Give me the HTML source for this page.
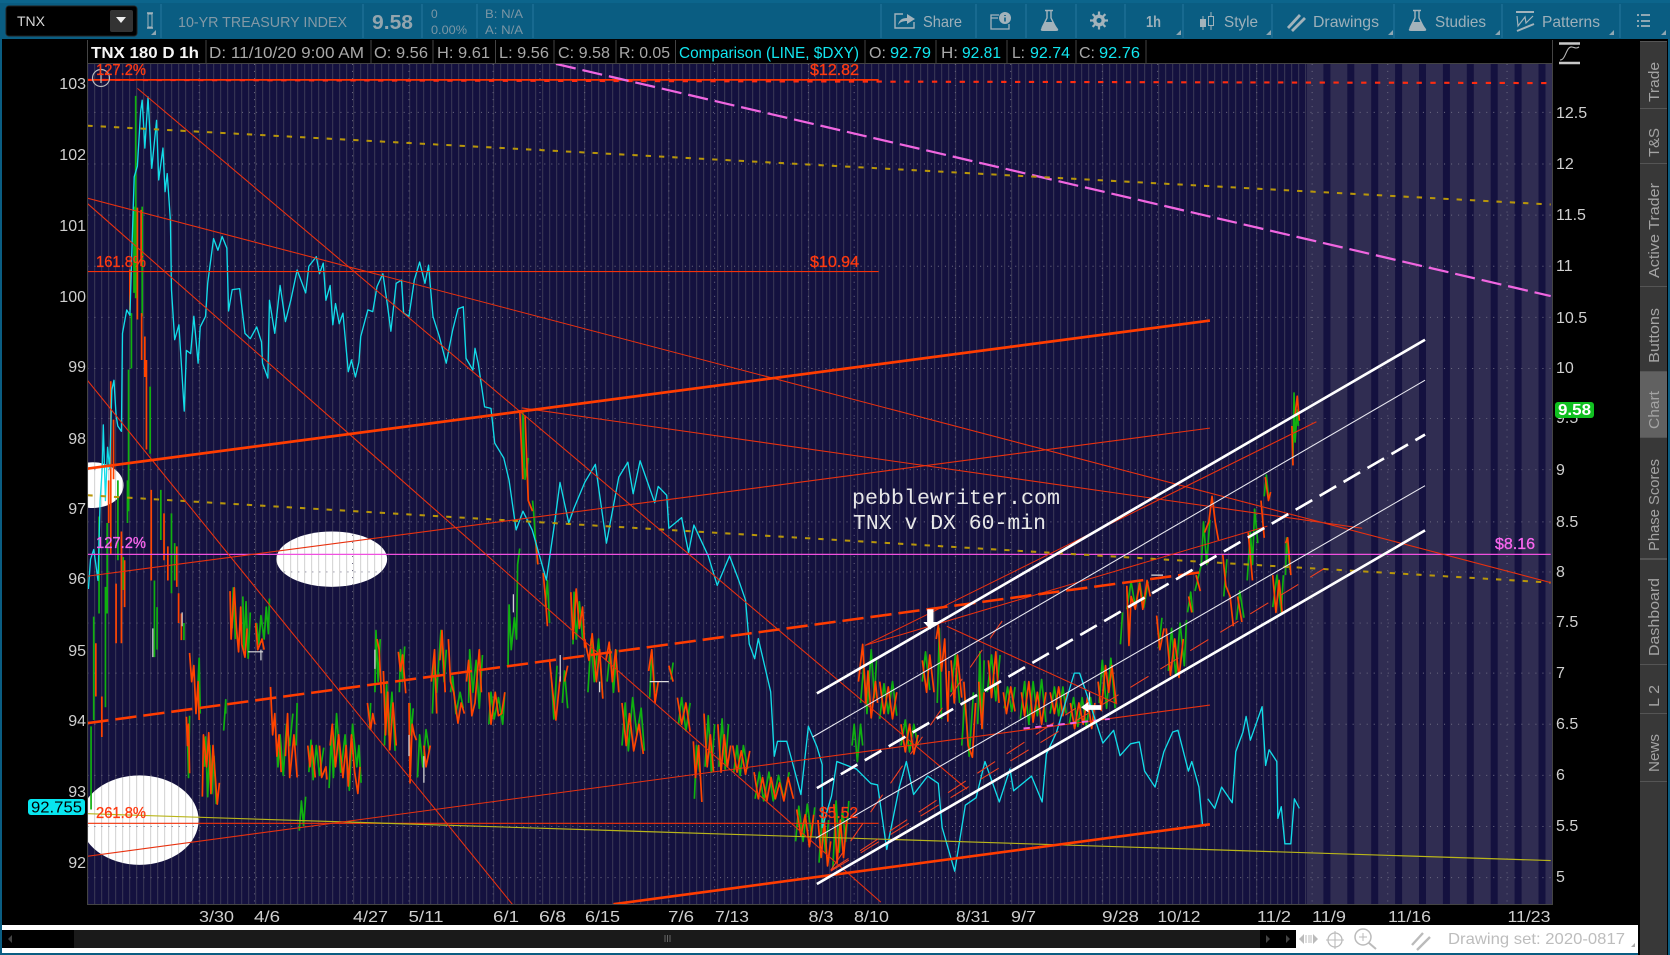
<!DOCTYPE html>
<html lang="en"><head><meta charset="utf-8"><title>TNX Chart</title>
<style>
html,body{margin:0;padding:0;background:#000;width:1670px;height:955px;overflow:hidden}
svg{display:block;font-family:"Liberation Sans",sans-serif}
.tb{fill:#9db0ba;font-size:16px}
.hd{fill:#a8a8a8;font-size:16px}
.cy{fill:#12e6f0;font-size:16px}
.ax{fill:#cfcfcf;font-size:16px}
.dt{fill:#cfcfcf;font-size:16px}
.tab{fill:#a3a3a3;font-size:15px}
.sep{stroke:#1d6f94;stroke-width:1.5}
.hs{stroke:#444;stroke-width:1}
.ic{fill:#a3b3bb}
.is{stroke:#a3b3bb;fill:none}
.rl{fill:#ff3a10;stroke:#ff3a10;stroke-width:.3}
.pl{fill:#f866ee;stroke:#f866ee;stroke-width:.3}
</style></head><body>
<svg width="1670" height="955" viewBox="0 0 1670 955" xmlns="http://www.w3.org/2000/svg">
<defs>
<pattern id="st" patternUnits="userSpaceOnUse" width="7" height="10" x="3"><rect x="0" y="0" width="1.2" height="10" fill="#808080" fill-opacity=".3"/></pattern>
<clipPath id="cc"><rect x="88" y="64" width="1464" height="840"/></clipPath>
</defs>
<rect width="1670" height="955" fill="#000"/>

<!-- toolbar -->
<rect x="0" y="0" width="1670" height="39" fill="#0a5d82"/>
<rect x="0" y="0" width="1670" height="3" fill="#0c658c"/>
<rect x="0" y="39" width="2" height="916" fill="#0a5d82"/>
<rect x="1668" y="39" width="2" height="916" fill="#0a5d82"/>
<rect x="6" y="6" width="131" height="30" rx="3" fill="#000" stroke="#222"/>
<rect x="110" y="10" width="23" height="22" rx="2" fill="#333"/>
<path d="M116 17h10l-5 6z" fill="#eee"/>
<text x="17" y="26" fill="#d8d8d8" font-size="14" textLength="28" lengthAdjust="spacingAndGlyphs">TNX</text>
<path d="M147 13h6M147 28h6" stroke="#a3b3bb" stroke-width="1.5"/><rect x="148" y="14" width="4" height="13" fill="none" stroke="#a3b3bb"/>
<path d="M156 30v5h-5z" fill="#8fa7b3"/>
<g class="sep"><path d="M161 4V38M363 4V38M422 4V38M477 4V38M533 4V38M881 4V38M976 4V38M1026 4V38M1076 4V38M1125 4V38M1183 4V38M1272 4V38M1394 4V38M1502 4V38M1620 4V38"/></g>
<text x="178" y="27" fill="#8399a6" font-size="15" textLength="169" lengthAdjust="spacingAndGlyphs">10-YR TREASURY INDEX</text>
<text x="372" y="29" fill="#93a5ae" font-size="20" font-weight="bold" textLength="41" lengthAdjust="spacingAndGlyphs">9.58</text>
<text x="431" y="18" fill="#7b96a5" font-size="12">0</text>
<text x="431" y="34" fill="#7b96a5" font-size="12" textLength="36" lengthAdjust="spacingAndGlyphs">0.00%</text>
<text x="485" y="18" fill="#7b96a5" font-size="12" textLength="38" lengthAdjust="spacingAndGlyphs">B: N/A</text>
<text x="485" y="34" fill="#7b96a5" font-size="12" textLength="38" lengthAdjust="spacingAndGlyphs">A: N/A</text>

<text x="923" y="27" class="tb" textLength="39" lengthAdjust="spacingAndGlyphs">Share</text>
<text x="1146" y="27" class="tb" font-weight="bold" font-size="14" textLength="15" lengthAdjust="spacingAndGlyphs">1h</text>
<text x="1224" y="27" class="tb" textLength="34" lengthAdjust="spacingAndGlyphs">Style</text>
<text x="1313" y="27" class="tb" textLength="66" lengthAdjust="spacingAndGlyphs">Drawings</text>
<text x="1435" y="27" class="tb" textLength="51" lengthAdjust="spacingAndGlyphs">Studies</text>
<text x="1542" y="27" class="tb" textLength="58" lengthAdjust="spacingAndGlyphs">Patterns</text>
<!-- share -->
<path class="is" stroke-width="1.4" d="M914 22V28H895V14H903"/>
<path class="ic" d="M898 25C899 20 902 18 907 18V14L915 19L907 24V21C903 21 900 22 898 25z"/>
<!-- notes -->
<path class="is" stroke-width="1.3" d="M1009 24V29H991V15H999M991 18H998"/>
<circle cx="1005" cy="18" r="6" class="ic"/><path d="M1005 15v1M1005 17.5v4" stroke="#0a5d82" stroke-width="1.6"/>
<!-- flask 1 -->
<path class="is" stroke-width="1.4" d="M1045 10.500h8M1047 11V18L1042 28M1051 11V18L1056 28"/>
<path class="ic" d="M1045 22H1053L1058 29Q1059 31 1056 31H1043Q1040 31 1041 29z"/>
<!-- gear -->
<circle cx="1099" cy="20.500" r="4.500" fill="none" stroke="#a3b3bb" stroke-width="3"/>
<path d="M1099 11.500v18M1090 20.500h18M1092.600 14.100l12.800 12.800M1105.400 14.100l-12.800 12.800" stroke="#a3b3bb" stroke-width="2.200"/>
<circle cx="1099" cy="20.500" r="2.500" fill="#0a5d82"/>
<!-- candles -->
<rect x="1200" y="19" width="6" height="8" class="ic"/><path class="is" d="M1203 16V30"/>
<rect x="1208.500" y="16.500" width="5" height="9" class="is"/><path class="is" d="M1211 12V16M1211 26V30"/>
<!-- drawings -->
<path class="is" stroke-width="2.800" d="M1288 28L1300 15M1292 31L1305 18"/>
<!-- flask 2 -->
<path class="is" stroke-width="1.4" d="M1413 10.500h8M1415 11V18L1410 28M1419 11V18L1424 28"/>
<path class="ic" d="M1413 22H1421L1426 29Q1427 31 1424 31H1411Q1408 31 1409 29z"/>
<!-- patterns -->
<path class="is" stroke-width="2" d="M1516 12H1534M1517 31L1534 24"/>
<path class="is" stroke-width="1.200" d="M1517 16L1518 26L1525 17L1526 23L1533 16"/>
<!-- list -->
<path d="M1637 15h2M1637 21h2M1637 26h2M1641 15h9M1641 21h9M1641 26h9" stroke="#a3b3bb" stroke-width="1.800"/>
<g fill="#8fa7b3">
<path d="M1181 30v5h-5zM1271 30v5h-5zM1393 30v5h-5zM1500 30v5h-5zM1614 30v5h-5zM1666 30v5h-5z"/>
</g>

<!-- header row -->
<rect x="87" y="40" width="1465" height="23" fill="#000"/>
<path class="hs" d="M87 63.500H1552M87.500 40V63M206 40V63M371 40V63M433 40V63M495.500 40V63M554 40V63M616 40V63M675.500 40V63M865 40V63M936 40V63M1007 40V63M1076 40V63M1146 40V63M1552.500 40V63"/>
<text x="91" y="58" fill="#f5f5f5" font-size="16" font-weight="bold" textLength="108" lengthAdjust="spacingAndGlyphs">TNX 180 D 1h</text>
<text x="209" y="58" class="hd" textLength="155" lengthAdjust="spacingAndGlyphs">D: 11/10/20 9:00 AM</text>
<text x="374" y="58" class="hd" textLength="54" lengthAdjust="spacingAndGlyphs">O: 9.56</text>
<text x="437" y="58" class="hd" textLength="53" lengthAdjust="spacingAndGlyphs">H: 9.61</text>
<text x="499" y="58" class="hd" textLength="50" lengthAdjust="spacingAndGlyphs">L: 9.56</text>
<text x="558" y="58" class="hd" textLength="52" lengthAdjust="spacingAndGlyphs">C: 9.58</text>
<text x="619" y="58" class="hd" textLength="51" lengthAdjust="spacingAndGlyphs">R: 0.05</text>
<text x="679" y="58" class="cy" textLength="180" lengthAdjust="spacingAndGlyphs">Comparison (LINE, $DXY)</text>
<text x="869" y="58" class="hd" textLength="17" lengthAdjust="spacingAndGlyphs">O:</text><text x="890" y="58" class="cy" textLength="41" lengthAdjust="spacingAndGlyphs">92.79</text>
<text x="941" y="58" class="hd" textLength="17" lengthAdjust="spacingAndGlyphs">H:</text><text x="962" y="58" class="cy" textLength="39" lengthAdjust="spacingAndGlyphs">92.81</text>
<text x="1012" y="58" class="hd" textLength="13" lengthAdjust="spacingAndGlyphs">L:</text><text x="1030" y="58" class="cy" textLength="40" lengthAdjust="spacingAndGlyphs">92.74</text>
<text x="1079" y="58" class="hd" textLength="16" lengthAdjust="spacingAndGlyphs">C:</text><text x="1099" y="58" class="cy" textLength="41" lengthAdjust="spacingAndGlyphs">92.76</text>

<!-- chart -->
<g clip-path="url(#cc)">
<rect x="87" y="63" width="1466" height="842" fill="#14113f"/>
<rect x="1307" y="63" width="246" height="842" fill="#302d52"/>
<g fill="#14113f">
<rect x="1323.400" y="63" width="7" height="842"/><rect x="1347.300" y="63" width="7" height="842"/><rect x="1371.200" y="63" width="7" height="842"/><rect x="1395.100" y="63" width="7" height="842"/><rect x="1419" y="63" width="7" height="842"/><rect x="1442.900" y="63" width="7" height="842"/><rect x="1466.800" y="63" width="7" height="842"/><rect x="1490.700" y="63" width="7" height="842"/><rect x="1514.600" y="63" width="7" height="842"/><rect x="1538.500" y="63" width="7" height="842"/>
</g>
<g transform="scale(1.06505)">
<ellipse cx="311.500" cy="525" rx="52" ry="26" fill="#fff"/>
<ellipse cx="131" cy="770" rx="55.500" ry="42" fill="#fff"/>
<ellipse cx="87" cy="455.500" rx="29" ry="21.500" fill="#fff"/>
</g>
<rect x="87" y="63" width="1220" height="842" fill="url(#st)"/>
<g transform="scale(1.06505)" fill="none" stroke-linejoin="round">
<!-- grid dots -->
<path stroke="#6a6880" stroke-width=".9" stroke-dasharray="1 5.600" d="M82 105.500H1456M82 154H1456M82 202H1456M82 250H1456M82 298H1456M82 346H1456M82 393H1456M82 441H1456M82 490H1456M82 537H1456M82 585H1456M82 632H1456M82 680H1456M82 728H1456M82 776H1456M82 824H1456M187 60V849M239 60V849M331 60V849M384 60V849M463 60V849M507 60V849M549 60V849M628 60V849M671 60V849M759 60V849M802 60V849M897 60V849M949 60V849M1035 60V849M1087 60V849M1180 60V849M1232 60V849M1303 60V849M1415 60V849"/>

<!-- candles green -->
<path stroke="#10b010" stroke-width="1.600" d="M127.400 90V280M125.800 194V275M133.500 194V297M120.700 347V480M123.400 294V346M141 363V426M85.500 682V760M88 579V676M93 485V576M99 551V664M100.600 491V576M110.700 451V526M115.700 523V554M119.700 451V491M145 545V617M147.500 570V610M151 460V507M161 482V557M164 510V545M172.700 585V601
M176 690 177 730 178 672M186 640 187 618 188 670
M192 720 193 692 195 748 197 700 199 745 201 710 203 755M210 686 212 657 212 670
M218 590 219 552 221 600M228 560 229 610 231 565 233 618 235 575M241 585 243 605 245 578 248 600 250 570 252 595 253 562
M260 700 261 720 263 690 266 728 269 680 272 700 275 670M278 700 279 660
M281 780 283 752 285 775 287 748M290 725 292 695 294 732 297 700 300 728 304 702
M309 740 311 690 313 730 316 670 320 725 324 690 328 742 331 680 335 720 337 700 339 735
M347 685 348 660M352 650 353 592 355 640 357 600M361 700 363 640 365 690 368 650 371 705
M375 650 376 610 378 640 380 607M385 660 386 690 388 665M392 730 394 690 397 720 400 685 403 705
M406 670 408 620 410 650 414 592 417 640 419 610M423 650 425 635 428 670 432 650 435 665
M440 660 441 610 444 650 447 620 450 665 453 615M459 680 461 650 464 675 468 655 472 680 474 650
M477 626 478 568 480 610 483 580 485 600 486 530 488 515M491 450 491 388 493 450 496 430M500 470 501 480 503 510 505 530M512 570 514 545 516 585M518 640 520 675 523 625
M528 660 530 630 533 665M538 605 539 556 541 600 544 565 547 600
M552 650 555 600 558 640 562 600 566 655M570 640 573 610 576 650 579 610
M584 700 587 660 590 705 594 655 598 690 602 665 605 705M610 655 612 612 615 650
M630 638 632 622M637 680 640 655 644 686 648 660M652 750 654 700 657 725
M662 720 665 672 668 725 671 680M675 720 678 675 681 722 684 680M689 725 692 700 695 728 698 700 702 722
M709 750 713 725 717 752 722 725 726 752 731 728 736 750 741 725
M747 790 750 757 754 790 758 755 762 785 765 758M769 810 772 765 775 800 778 770M782 815 785 752 788 800 791 760 794 790 797 752
M800 700 802 680 805 715 808 680 810 700M808 660 811 625 814 670 818 610 821 655 823 620
M826 675 830 642 834 670 838 640 842 672M846 700 850 676 854 706 858 680 862 700M866 640 869 612 873 648
M880 660 882 590 884 675M893 650 897 615 901 660M903 700 906 655 910 710 914 650M918 680 920 612 922 684 924 620
M927 650 931 615 935 658 939 615M943 665 946 645 950 668 953 645M958 675 962 640 966 680 970 640 974 672 978 638 982 678
M986 670 990 645 994 672 998 645 1001 670M1004 680 1008 655 1012 682 1016 655 1020 682 1024 655 1028 680
M1032 660 1035 620 1039 665 1043 618 1047 665
M1052 605 1054 575M1058 572 1062 546 1066 570 1070 546 1074 570 1078 546
M1088 608 1091 580M1097 630 1100 590 1104 635 1108 585 1112 625 1114 582M1115 575 1118 556 1120 575M1122 555 1126 538 1128 530 1130 490 1133 530 1136 488
M1149 560 1152 525M1161 582 1164 555 1168 580M1171 545 1174 500 1176 530 1178 478 1181 510M1187 466 1189 446 1191 466
M1195 570 1199 540 1203 575 1205 540M1207 540 1208 505 1211 535M1214 430 1215 369 1216 415 1218 385 1219 400"/>

<!-- candles red -->
<path stroke="#ff4400" stroke-width="1.600" d="M122 253V291M129 195V300M132.500 197V250M133 294V338M136 316V354M137.500 338V422M104 358V470M106.600 394V450M90 604V654M95.600 654V692M102 451V491M104 451V520M109 548V604M114 499V604M117 526V570M142 460V545M154 482V526M157.600 513V545M166 513V551M167.700 557V585M170.300 576V601
M175 673 176 700 177 680 178 726M178 613 180 640 182 625 184 670 186 640 187 676
M190 748 191 690 194 720 196 688 198 745 200 700 204 755 206 735
M216 555 217 600 220 552 222 590 224 612 226 570 227 605 230 617 232 590M240 585 242 610 246 600 248 610
M254 645 256 690 258 670 260 710 262 690 264 725M268 710 270 670 272 730 276 690 279 730
M289 700 291 720 293 700 296 730M300 700 302 730 306 720 307 732M310 700 312 680 315 720 318 690 322 730 325 700 327 738 330 690 333 725 336 745 338 720
M345 660 348 685 350 670 352 680M354 600 356 610 358 651M360 630 362 690 364 650 366 704 369 660 372 700
M374 612 376 630 378 615 381 651M384 660 385 735 387 680 389 690 391 695M398 700 400 720 404 700
M405 640 408 610 410 670M413 620 415 592 418 650M421 600 423 640 426 650 430 679 433 660 436 670
M438 640 440 620 443 672 446 660 450 610 452 650M459 650 461 680 465 650 468 672 471 670 474 650
M488 385 491 450M493 390 496 470 500 480M503 507 505 530M510 538 512 560 514 588M516 620 519 650 522 676 526 635
M530 640 533 625M536 556 538 600 541 553 544 590 547 570 549 608
M549 600 553 620 556 595 560 640 563 610 566 656M569 620 572 603 575 640 578 610 581 650
M584 660 588 700 591 670 595 705 600 680 604 708M609 630 612 610 615 660 618 640
M628 625 632 640M636 655 640 680 644 660 648 687M651 696 653 730 656 700 659 753
M661 670 664 720 667 690 670 725M674 680 677 725 680 690 683 720 686 700M688 700 692 725 696 705 700 727 704 705
M708 725 712 750 716 730 720 752 724 730 728 750 732 735 736 752 740 730 745 750
M748 760 752 785 756 765 760 795 764 765M768 770 771 805 774 770 777 813 780 790M783 755 786 810 789 770 792 805 795 770
M806 640 810 605 813 660 815 630 818 674 822 640 824 660
M826 640 830 670 834 645 838 675 842 650M846 680 850 706 854 680 858 708 862 690M866 620 870 650 873 615 877 650
M879 600 881 587 884 630 887 600 890 677 891 630M893 620 896 660 899 615 903 655M905 640 909 700 913 711 916 660M919 640 922 684 924 650
M928 620 931 655 935 612 938 660M942 650 945 670 949 645 953 668M959 650 962 672 966 640 970 678 974 650 978 680 982 650
M986 650 990 670 994 645 998 672 1002 650M1005 660 1009 684 1013 660 1017 680 1021 655 1025 684 1028 660
M1031 640 1034 667 1038 625 1041 650 1044 625 1048 660
M1058 550 1060 606 1062 560 1066 572 1070 548 1073 572 1077 545 1080 560
M1086 578 1089 610 1093 590M1095 590 1099 634 1103 600 1107 636 1111 600M1116 560 1119 575M1123 540 1127 555M1131 500 1135 490 1138 466 1141 490 1144 507M1148 520 1151 550 1155 560 1158 588M1162 560 1166 584M1172 500 1176 545M1184 470 1187 505M1188 448 1191 470 1193 462M1195 540 1198 575 1201 545 1204 577M1207 510 1209 505 1212 540M1213 400 1214 437M1216 390 1218 372 1220 395"/>
<path stroke="#ddd" stroke-width="1.100" d="M143.500 590V617M171 575V588M233 612H247M245 610V620M352 610V628M384 690V710M398 710V735M482 558V575M526 615V640M563 640V650M610 640H628M1081 540H1092M1023 650V665"/>

<!-- cyan -->
<polyline stroke="#12dce8" stroke-width="1.250" points="83,553 85,525 88,516 90,530 92,545 94,470 96,440 97,399 99,470 101,420 103,440 105,366 107,357 109,390 110.600,400 114,405 115,313 119,291 122,296 124,230 126,166 129,156 132,105 133.500,94 136,139 139,91 142.500,158 147,113 149,169 153,139 155,180 157,163 160,207 161,272 164,319 168,305 173,386 175,329 179,332 182,297 186,341 188,307 193,297 195,266 200.500,224 204.600,235 208.600,222 213,233 214.600,292 218,272 225,271 230,313 235,318 241,307 245.500,321 246.500,341 251.500,355 253,282 258,313 263,268 268,302 273,282 279,253.500 287,275 290,250 297,241 300,257 303.500,247 306,282 310,268 312.500,305 315,285 318.500,304 322,294 327,349 330,338 333.700,354 337,340 338.700,316 345.400,291 350,292.600 354,269 359.500,257 364,288 367,311 372,266 377,263 379,294 384,297 389,263 394,246 399,266 402.400,249 406.500,297 412.500,316 419,341 425,310 430,290 435,288 437.600,336.500 444,347.400 446,327 449,341 455,382 461,383.400 464.500,416 473,430 478,451 484.600,497.600 491,480 499.700,497.600 513,544.600 519.800,497.600 525.800,453 534,491 539,477 549,453 559,436 569.400,510 581,448 589.500,434 594.500,463.600 601,432.600 614.700,472 618,456.700 626,465 628,496 640,486 646.500,518.600 651.500,493 665,522 673.400,549.600 685,522 693.500,544.500 700,563.400 703.500,604.700 708.600,618.500 712,599.600 723.600,649.500 727,710 730,696 738.700,696 743.800,715 752,746 759,682 767,701 772,718 772,777 780.700,747.600 785.700,715 804,722 817.600,735.600 824,737 832.600,797.600 844.400,739 851,715 857.800,746 871,728.700 881,735.600 884.600,777 896.400,818 903,777 906.400,756 916.500,749 924.800,715 938.300,753 948.300,722 951.700,742.500 968.500,728.700 978.500,753 982.500,708 992,687.400 1008.700,632 1013.700,632 1025.500,667 1035.500,697.700 1045.600,685.700 1051.600,709.500 1061.500,698.400 1069.700,696.600 1074.700,724 1084.500,739 1092.800,705.800 1101,687.400 1106,685.600 1115.800,724 1119,715 1125.700,739 1129,774"/>
<polyline stroke="#12dce8" stroke-width="1.250" points="1134,750 1140.500,759 1147,739 1157,753.700 1160.300,705.800 1167,687.400 1170,672.700 1174,695 1185,663.500 1188.300,718.700 1191.600,704 1198.800,715 1199.800,768.400 1203,757.400 1206.400,792.300 1212,792.300 1215.300,750 1220,759"/>

<!-- horizontals -->
<path stroke="#f2320a" stroke-width="1" d="M82 255H825M82 773H825"/>
<path stroke="#ff3300" stroke-width="1.600" d="M82 75H825"/>
<path stroke="#ff2c10" stroke-width="2" stroke-dasharray="5 8" d="M82 75L1456 78"/>
<path stroke="#f050e0" stroke-width="1.100" d="M82 520.500H1456"/>
<!-- dashed -->
<path stroke="#f066e0" stroke-width="2.100" stroke-dasharray="19 6.500" d="M522 60L1456 278"/>
<path stroke="#b8960a" stroke-width="1.900" stroke-dasharray="5 7.500" d="M82 118L1456 192M82 465L1456 547"/>
<!-- yellow -->
<path stroke="#b9b51a" stroke-width="1.100" d="M82 764L1456 808"/>
<!-- thin reds -->
<g stroke="#e8310f" stroke-width="1">
<path d="M129 83L908 741M82 191L827 847M82 357L481 849M82 186L1456 547M490 383L1279 496M82 541L1136 402M82 804L1136 662M812 606L1236 396M812 606L1190 494M889 588L1049 661"/>
</g>
<path stroke="#ff3c00" stroke-width="2.500" d="M82 440L1136 301M576 849L1136 774"/>
<path stroke="#ff3c00" stroke-width="2.400" stroke-dasharray="20 6.500" d="M82 679L1130 537"/>
<path stroke="#f04020" stroke-width="1" stroke-dasharray="20 13" d="M780 818L1243 534M780 817L943 580M780 817L1010 665"/>
<path stroke="#f060e0" stroke-width="1.800" stroke-dasharray="6 5" d="M961 684L1042 675"/>
<!-- white channel -->
<g stroke="#fff">
<path stroke-width="2.500" d="M767 651L1338 319M767 830L1338 498"/>
<path stroke-width="2.500" stroke-dasharray="18 8" d="M767 740L1338 408"/>
<path stroke-width="1" stroke="#e8e8f0" d="M763 692L1338 357M766 787L1338 456"/>
</g>
<path fill="#fff" d="M870.500 572H876.500V584H880L873.500 591L867 584H870.500z"/>
<path fill="#fff" d="M1015 664L1022 659V662H1034V666.500H1022V669z"/>
</g>
<circle cx="101" cy="78" r="8.500" fill="none" stroke="#bbb" stroke-width="1.200"/>
<path d="M101 73V83M99 74.500L101 73" stroke="#bbb" stroke-width="1.200" fill="none"/>
</g>
<path class="hs" fill="none" stroke="#555" d="M87.500 63V904.500H1552.500V63"/>

<!-- labels on chart -->
<g font-size="16">
<text x="96" y="75" class="rl" textLength="50" lengthAdjust="spacingAndGlyphs">127.2%</text>
<text x="96" y="267" class="rl" textLength="50" lengthAdjust="spacingAndGlyphs">161.8%</text>
<text x="96" y="818" class="rl" textLength="50" lengthAdjust="spacingAndGlyphs">261.8%</text>
<text x="810" y="75" class="rl" textLength="49" lengthAdjust="spacingAndGlyphs">$12.82</text>
<text x="810" y="267" class="rl" textLength="49" lengthAdjust="spacingAndGlyphs">$10.94</text>
<text x="819" y="818" class="rl" textLength="39" lengthAdjust="spacingAndGlyphs">$5.52</text>
<text x="96" y="548" class="pl" textLength="50" lengthAdjust="spacingAndGlyphs">127.2%</text>
<text x="1495" y="549" class="pl" textLength="40" lengthAdjust="spacingAndGlyphs">$8.16</text>
</g>
<g font-family="Liberation Mono,monospace" font-size="21.500" fill="#e8e8e8">
<text x="852" y="504" textLength="208" lengthAdjust="spacingAndGlyphs">pebblewriter.com</text>
<text x="853" y="529" textLength="193" lengthAdjust="spacingAndGlyphs">TNX v DX 60-min</text>
</g>

<!-- left axis -->
<g class="ax" text-anchor="end">
<text x="86" y="89">103</text><text x="86" y="160">102</text><text x="86" y="231">101</text><text x="86" y="302">100</text><text x="86" y="372">99</text><text x="86" y="444">98</text><text x="86" y="514">97</text><text x="86" y="584">96</text><text x="86" y="656">95</text><text x="86" y="726">94</text><text x="86" y="797">93</text><text x="86" y="868">92</text>
</g>
<rect x="28" y="799" width="57" height="16" rx="3" fill="#08e6f0"/>
<text x="31" y="812.500" fill="#000" font-size="15.500" textLength="51" lengthAdjust="spacingAndGlyphs">92.755</text>

<!-- right axis -->
<g class="ax">
<text x="1556" y="118">12.5</text><text x="1556" y="169">12</text><text x="1556" y="220">11.5</text><text x="1556" y="271">11</text><text x="1556" y="323">10.5</text><text x="1556" y="373">10</text><text x="1556" y="423">9.5</text><text x="1556" y="475">9</text><text x="1556" y="527">8.5</text><text x="1556" y="577">8</text><text x="1556" y="627">7.5</text><text x="1556" y="678">7</text><text x="1556" y="729">6.5</text><text x="1556" y="780">6</text><text x="1556" y="831">5.5</text><text x="1556" y="882">5</text>
</g>
<rect x="1555" y="402" width="39" height="16" rx="3" fill="#10c020"/>
<text x="1558" y="415" fill="#fff" font-size="15.500" font-weight="bold" textLength="33" lengthAdjust="spacingAndGlyphs">9.58</text>
<path d="M1559 43.500H1580M1559 63H1580" stroke="#c8c8c8" stroke-width="2.400"/>
<path d="M1560 60C1566 60 1566 46 1572 47C1575 47.500 1576 49 1579 47" fill="none" stroke="#b8b8b8" stroke-width="1.100"/>

<!-- dates -->
<g class="dt">
<text x="199" y="922" textLength="35" lengthAdjust="spacingAndGlyphs">3/30</text>
<text x="254" y="922" textLength="26" lengthAdjust="spacingAndGlyphs">4/6</text>
<text x="353" y="922" textLength="35" lengthAdjust="spacingAndGlyphs">4/27</text>
<text x="408.500" y="922" textLength="35" lengthAdjust="spacingAndGlyphs">5/11</text>
<text x="493" y="922" textLength="26" lengthAdjust="spacingAndGlyphs">6/1</text>
<text x="539" y="922" textLength="27" lengthAdjust="spacingAndGlyphs">6/8</text>
<text x="585" y="922" textLength="35" lengthAdjust="spacingAndGlyphs">6/15</text>
<text x="668" y="922" textLength="26" lengthAdjust="spacingAndGlyphs">7/6</text>
<text x="715" y="922" textLength="34" lengthAdjust="spacingAndGlyphs">7/13</text>
<text x="808.500" y="922" textLength="25" lengthAdjust="spacingAndGlyphs">8/3</text>
<text x="854" y="922" textLength="35" lengthAdjust="spacingAndGlyphs">8/10</text>
<text x="956" y="922" textLength="34" lengthAdjust="spacingAndGlyphs">8/31</text>
<text x="1011" y="922" textLength="25" lengthAdjust="spacingAndGlyphs">9/7</text>
<text x="1102" y="922" textLength="37" lengthAdjust="spacingAndGlyphs">9/28</text>
<text x="1157.500" y="922" textLength="43" lengthAdjust="spacingAndGlyphs">10/12</text>
<text x="1257" y="922" textLength="34" lengthAdjust="spacingAndGlyphs">11/2</text>
<text x="1312" y="922" textLength="34" lengthAdjust="spacingAndGlyphs">11/9</text>
<text x="1388" y="922" textLength="43" lengthAdjust="spacingAndGlyphs">11/16</text>
<text x="1507.500" y="922" textLength="43" lengthAdjust="spacingAndGlyphs">11/23</text>
</g>

<!-- bottom bar -->
<rect x="2" y="925" width="1636" height="28" fill="#fff"/>
<rect x="2" y="930" width="1294" height="18" fill="#1a1a1a"/>
<rect x="2" y="930" width="72" height="18" fill="#000"/>
<rect x="1260" y="930" width="36" height="18" fill="#000"/>
<rect x="0" y="953" width="1670" height="2" fill="#0a5d82"/>
<path d="M8 939l4-4v8zM1270 939l-4-4v8zM1286 935l4 4-4 4z" fill="#444"/>
<path d="M665 935v7M667.500 935v7M670 935v7" stroke="#666"/>
<path d="M1299 939l5-5v10zM1318 939l-5-5v10z" fill="#bbb"/><path d="M1306 935v8M1309 935v8M1311 935v8" stroke="#bbb"/>
<circle cx="1335" cy="940" r="7" fill="none" stroke="#bbb" stroke-width="1.300"/><path d="M1326 940h18M1335 931v18" stroke="#bbb" stroke-width="1.100"/>
<circle cx="1363" cy="937" r="8" fill="none" stroke="#bbb" stroke-width="1.500"/><path d="M1369 943L1376 949" stroke="#bbb" stroke-width="2"/><path d="M1359 937h8M1363 933v8" stroke="#bbb"/>
<path d="M1412 945L1423 933M1417 950L1430 937" stroke="#bbb" stroke-width="2.400"/>
<text x="1448" y="944" fill="#bdbdbd" font-size="16" textLength="177" lengthAdjust="spacingAndGlyphs">Drawing set: 2020-0817</text>
<path d="M1635 943v4h-4z" fill="#aaa"/>

<!-- right tabs -->
<rect x="1638" y="39" width="30" height="916" fill="#000"/>
<rect x="1640" y="41" width="27" height="741" fill="#555"/>
<rect x="1640" y="782" width="27" height="173" fill="#383838"/>
<g fill="#383838">
<rect x="1640" y="42" width="27" height="66"/><rect x="1640" y="109" width="27" height="54"/><rect x="1640" y="164" width="27" height="122"/><rect x="1640" y="287" width="27" height="84"/><rect x="1640" y="438" width="27" height="120"/><rect x="1640" y="560" width="27" height="104"/><rect x="1640" y="665" width="27" height="48"/><rect x="1640" y="714" width="27" height="67"/>
</g>
<rect x="1640" y="372" width="27" height="65" fill="#616161"/>
<g class="tab">
<text transform="translate(1659 102) rotate(-90)" textLength="40" lengthAdjust="spacingAndGlyphs">Trade</text>
<text transform="translate(1659 157) rotate(-90)" textLength="29" lengthAdjust="spacingAndGlyphs">T&amp;S</text>
<text transform="translate(1659 278) rotate(-90)" textLength="95" lengthAdjust="spacingAndGlyphs">Active Trader</text>
<text transform="translate(1659 363) rotate(-90)" textLength="55" lengthAdjust="spacingAndGlyphs">Buttons</text>
<text transform="translate(1659 429) rotate(-90)" textLength="38" lengthAdjust="spacingAndGlyphs">Chart</text>
<text transform="translate(1659 551) rotate(-90)" textLength="92" lengthAdjust="spacingAndGlyphs">Phase Scores</text>
<text transform="translate(1659 656) rotate(-90)" textLength="78" lengthAdjust="spacingAndGlyphs">Dashboard</text>
<text transform="translate(1659 707) rotate(-90)" textLength="22" lengthAdjust="spacingAndGlyphs">L 2</text>
<text transform="translate(1659 772) rotate(-90)" textLength="38" lengthAdjust="spacingAndGlyphs">News</text>
</g>
</svg>
</body></html>
